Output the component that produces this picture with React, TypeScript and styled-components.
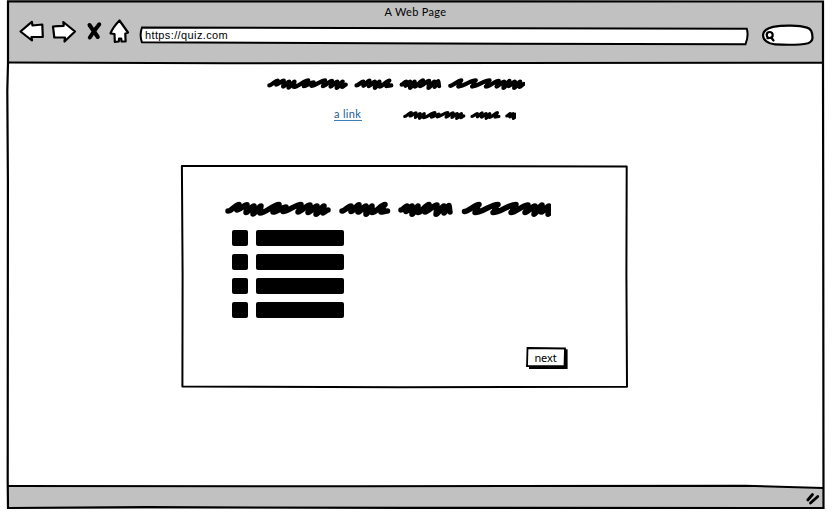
import React from "react";
import styled, { createGlobalStyle } from "styled-components";

const GlobalStyle = createGlobalStyle`
  * { box-sizing: border-box; }
  body { margin: 0; background: #fff; font-family: Lato, "Noto Sans", sans-serif; font-size: 11px; color: #000; }
  svg { display: block; flex: none; }
`;

const Page = styled.div`
  width: 833px;
  height: 516px;
  padding: 1px 9px 7px 7px;
`;

const Browser = styled.div`
  position: relative;
  width: 817px;
  height: 508px;
  display: flex;
  flex-direction: column;
`;

const Outline = styled.svg`
  position: absolute;
  inset: 0;
  overflow: visible;
  pointer-events: none;
  fill: none;
  stroke: #000;
`;

const Header = styled.header`
  height: 62px;
  background: #c1c1c1;
  display: flex;
  flex-direction: column;
`;

const Title = styled.div`
  height: 18px;
  padding-top: 3px;
  line-height: 15px;
  text-align: center;
  letter-spacing: 0.32px;
`;

const Toolbar = styled.div`
  height: 24px;
  display: flex;
  align-items: center;
  padding-left: 12px;
`;

const Icon = styled.svg`
  fill: #fff;
  stroke: #000;
  stroke-width: 2.2;
  stroke-linejoin: round;
  stroke-linecap: round;
  overflow: visible;
`;

const Address = styled.div`
  position: relative;
  width: 607px;
  height: 18px;
  margin: 9px 0 0 10px;
  padding-left: 4px;
  line-height: 17px;
  font-family: "Liberation Sans", Arial, sans-serif;
  letter-spacing: 0.38px;
`;

const AddressShape = styled(Outline)`
  fill: #fff;
  stroke-width: 2;
`;

const Url = styled.span`
  position: relative;
`;

const Search = styled(Icon)`
  margin: 8px 0 0 14px;
`;

const Content = styled.main`
  height: 424px;
  background: #fff;
  display: flex;
  flex-direction: column;
`;

const Heading = styled.div`
  padding: 14px 0 0 260px;
`;

const LinkRow = styled.div`
  display: flex;
  align-items: flex-end;
  height: 16px;
  margin-top: 14px;
  padding-left: 327px;
`;

const Link = styled.a`
  width: 28px;
  height: 15px;
  margin: 0 41px 0 0;
  line-height: 15px;
  color: #1e5a96;
  letter-spacing: 0.3px;
  border-bottom: 1px solid #3d7db8;
`;

const Card = styled.section`
  position: relative;
  width: 446px;
  height: 222px;
  margin: 44px 0 0 174px;
  padding: 35px 0 0 44px;
`;

const Answers = styled.ul`
  list-style: none;
  margin: 12px 0 0 7px;
  padding: 0;
  display: flex;
  flex-direction: column;
  gap: 8px;
`;

const Answer = styled.li`
  display: flex;
  gap: 8px;
`;

const Block = styled.span<{ $width: number }>`
  width: ${(p) => p.$width}px;
  height: 16px;
  border-radius: 2px;
  background: #000;
`;

const NextButton = styled.button`
  display: block;
  position: relative;
  width: 40px;
  height: 22px;
  margin: 29px 0 0 301px;
  padding: 0 1px 1px 0;
  border: 0;
  background: transparent;
  color: #000;
  font: 11px/19px "Noto Sans", sans-serif;
  letter-spacing: -0.1px;
`;

const Footer = styled.footer`
  height: 22px;
  background: #c1c1c1;
  display: flex;
  justify-content: flex-end;
  padding: 5px 4px 0 0;
`;

type Point = [number, number];

const words: Point[][] = [
  [[3, 11], [14, 4.6], [12, 10], [22, 4.8], [21, 12.5], [29, 6], [28, 14], [36, 6], [35, 13], [54, 4.4], [48, 12], [61, 7], [58, 11.5], [76, 4.4], [73, 12], [85, 5], [83, 12.5], [92, 6], [91, 14.3], [99, 6], [98, 13], [103, 10]],
  [[117, 11], [126, 6], [126, 11.5], [134, 4.8], [133, 12], [141, 6], [141, 14.3], [147, 6], [147, 12.5], [160, 4.6], [156, 12], [162.5, 11]],
  [[176, 10], [182, 6], [181, 11.5], [187, 6], [187, 14.3], [193, 6], [193, 12.5], [204, 4.5], [200, 12], [212, 5], [211, 14.3], [219, 6], [219, 13], [224, 5.5], [225, 12]],
  [[239.5, 11.5], [254, 4.4], [250, 12.5], [273, 4.4], [268, 12.5], [291, 4.4], [286, 12.5], [303, 5], [300, 12.5], [310, 6], [309, 14.3], [317, 5], [316, 12], [324, 6], [323, 14.3], [331, 6], [330, 13], [336, 9]],
];

function wordPath(points: Point[]) {
  return points
    .map(([x, y], i) => {
      if (i === 0) return `M${x} ${y}`;
      const [px, py] = points[i - 1];
      const bend = (x - px) * 0.3;
      return `C${px + bend} ${py} ${x - bend} ${y} ${x} ${y}`;
    })
    .join("");
}

function Scribble({ width, height, scale }: { width: number; height: number; scale: number }) {
  return (
    <svg
      width={width}
      height={height}
      viewBox={`0 0 ${width / scale} ${height / scale}`}
      fill="none"
      stroke="#000"
      strokeWidth="5.5"
      strokeLinejoin="round"
      strokeLinecap="round"
    >
      {words.map((w, i) => (
        <path key={i} d={wordPath(w)} />
      ))}
    </svg>
  );
}

export default function App() {
  return (
    <>
      <GlobalStyle />
      <Page>
        <Browser>
          <Header>
            <Title>A Web Page</Title>
            <Toolbar>
              <Icon width="26" height="22" viewBox="0 0 26 22">
                <path d="M1.5 11.5 12.8 1.8 13.5 5.5 23.3 4.5 23.8 17 12.5 17 13 20.5Z" />
              </Icon>
              <Icon width="26" height="22" viewBox="0 0 26 22">
                <g transform="translate(6.5 0)">
                  <path d="M1.5 6.5Q6 6 12.2 5.8L11.8 2 23.5 11.5 13 21.5 13.5 17.5 2.8 17.5Z" />
                </g>
              </Icon>
              <Icon width="40" height="22" viewBox="0 0 40 22">
                <g fill="none" strokeWidth="4">
                  <path d="M18.5 5 26.8 17" />
                  <path d="M28.3 4.3 23.5 10.5 18.8 17.5" />
                </g>
              </Icon>
              <Icon width="20" height="24" viewBox="0 0 20 24">
                <path d="M8.5 1.5 17 13.5 14.3 14.5 14.6 22.5 10.5 22.3 10.2 19.5 8 19.7 7.8 22.5 3.8 22.8 3.5 15 -.5 14.5Q2 8 8.5 1.5Z" />
              </Icon>
              <Address>
                <AddressShape width="607" height="18" viewBox="0 0 607 18">
                  <path d="M1 .5Q150 .4 300 1.2T605.7 1.7Q608 8 604.5 17.2Q450 17.2 300 16.5T1 15.3Q-1.8 8 1 .5Z" />
                </AddressShape>
                <Url>https://quiz.com</Url>
              </Address>
              <Search width="52" height="22" viewBox="0 0 52 22">
                <path d="M11 2.9C22 .9 37 1.4 45 3.6Q50.5 5 50.5 13.4Q50.5 17.4 46 19.2C36 21.5 23 20.9 13 20.4C6 19.9 1 15.9 1 11.2C1 7.4 5 4.4 11 2.9Z" />
                <circle cx="7.7" cy="11" r="3" />
                <path d="M6.5 14.2 5.5 14.2M9.2 13.5 11.5 16.5" />
              </Search>
            </Toolbar>
          </Header>
          <Content>
            <Heading>
              <Scribble width={258} height={14} scale={0.765} />
            </Heading>
            <LinkRow>
              <Link>a link</Link>
              <Scribble width={113} height={11} scale={0.59} />
            </LinkRow>
            <Card>
              <Outline width="446" height="222" viewBox="0 0 446 222" strokeWidth="2" strokeLinejoin="round">
                <path d="M.9 1 230 .9 445.7 1.6 445.4 110 446 221.7 220 222.2 1.4 221.5 1.6 110Z" />
              </Outline>
              <Scribble width={326} height={18} scale={1} />
              <Answers>
                {[1, 2, 3, 4].map((n) => (
                  <Answer key={n}>
                    <Block $width={16} />
                    <Block $width={88} />
                  </Answer>
                ))}
              </Answers>
              <NextButton>
                next
                <Outline width="42" height="23" viewBox="0 0 42 23">
                  <path d="M1.5 1 39 1.5 38.5 18.8 1 19.2Z" strokeWidth="1.8" />
                  <path d="M40 2.3V20.5H3" strokeWidth="3.2" />
                </Outline>
              </NextButton>
            </Card>
          </Content>
          <Footer>
            <Icon width="14" height="14" viewBox="0 0 14 14">
              <g fill="none" strokeWidth="2.8">
                <path d="M6.5 2.5 1.8 8M11.8 4.5 4.5 11" />
              </g>
            </Icon>
          </Footer>
          <Outline width="817" height="508" viewBox="0 0 817 508" strokeWidth="2.2">
            <path d="M1 .4H410L816 .5 816 70 816.2 180 816.5 507 400 506.9 140 506.2 1 507 .7 480 .9 180 .3 90 1 62Z" />
            <path d="M1 61.5 220 62.2 500 62 816 61.8" strokeWidth="2" />
            <path d="M1 485 350 485.2 738 484.8 816 487" strokeWidth="2" />
          </Outline>
        </Browser>
      </Page>
    </>
  );
}
